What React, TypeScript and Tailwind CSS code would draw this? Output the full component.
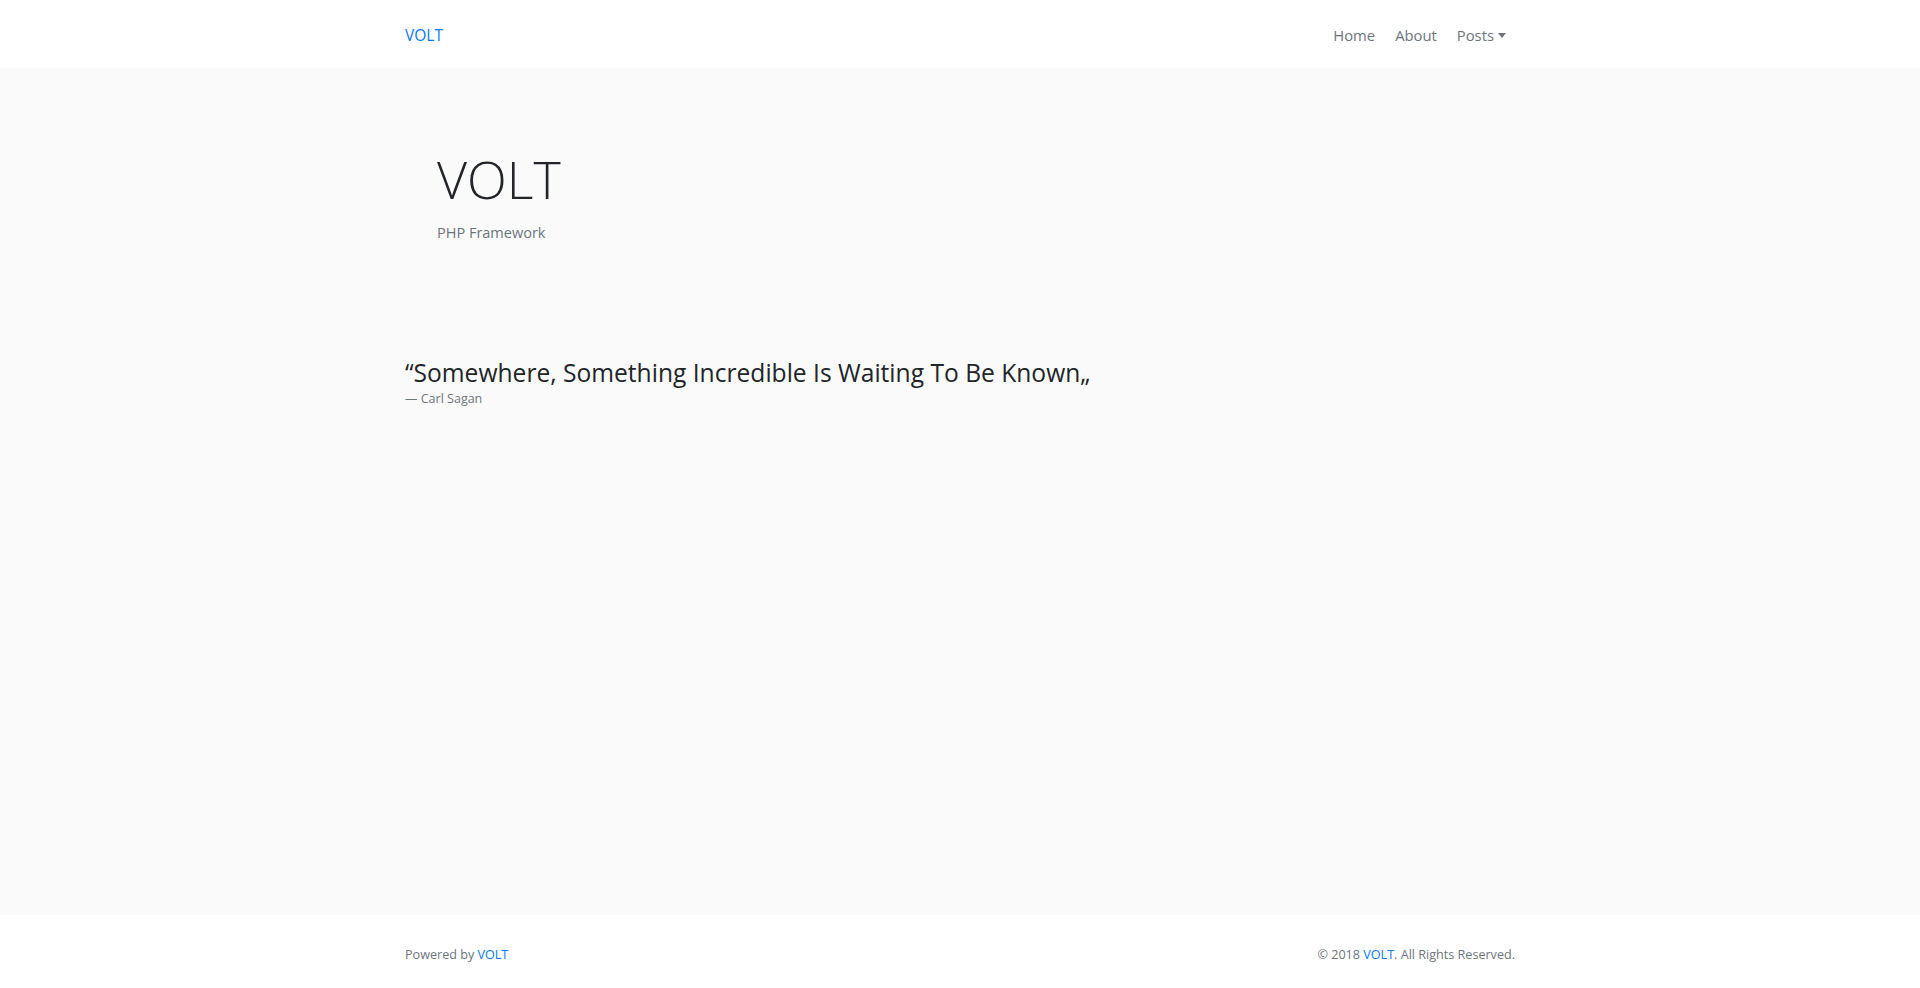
import React from "react";

export default function App() {
  const font = { fontFamily: '"Open Sans", "Noto Sans", sans-serif' };
  return (
    <div className="min-h-[988px] flex flex-col bg-[#fafafa] text-[#212529]" style={font}>
      <nav className="bg-white h-[68px]">
        <div className="w-[1140px] mx-auto px-[15px] h-full flex items-center justify-between">
          <a className="text-[#007bff] text-[15.5px] leading-none mt-[4px]">VOLT</a>
          <ul className="flex items-center text-[14.8px] text-[#6c757d] mt-[2px]">
            <li className="px-[10px]">Home</li>
            <li className="px-[10px]">About</li>
            <li className="pl-[10px] pr-[9px] flex items-center">
              Posts
              <span className="ml-[4px] inline-block w-0 h-0 border-l-[4px] border-r-[4px] border-t-[5px] border-l-transparent border-r-transparent border-t-[#6c757d]" />
            </li>
          </ul>
        </div>
      </nav>
      <main className="flex-1">
        <div className="w-[1140px] mx-auto px-[15px]">
          <div className="px-[32px] pt-[80px] pb-[60px]">
            <h1 className="text-[52px] font-light leading-[1.2] text-[#212529]">VOLT</h1>
            <p className="text-[14.5px] text-[#6c757d] mt-[12px]">PHP Framework</p>
          </div>
          <blockquote className="mt-[54px]">
            <p className="text-[24.6px] leading-[1.2] text-[#212529]">“Somewhere, Something Incredible Is Waiting To Be Known„</p>
            <footer className="text-[12.5px] text-[#6c757d] leading-[1.5] mt-[2px]">— Carl Sagan</footer>
          </blockquote>
        </div>
      </main>
      <footer className="bg-white h-[73px]">
        <div className="w-[1140px] mx-auto px-[15px] h-full flex items-center justify-between text-[12.6px] text-[#6c757d] pt-[8px]">
          <span>Powered by <a className="text-[#007bff]">VOLT</a></span>
          <span>© 2018 <a className="text-[#007bff]">VOLT</a>. All Rights Reserved.</span>
        </div>
      </footer>
    </div>
  );
}
